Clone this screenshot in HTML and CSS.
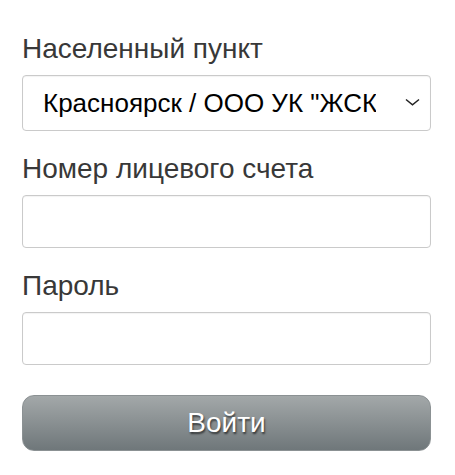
FILE: index.html
```html
<!DOCTYPE html>
<html lang="ru">
  <head>
    <meta charset="UTF-8" />
    <meta name="viewport" content="width=device-width, initial-scale=1.0" />
    <title>Вход</title>
    <link rel="stylesheet" href="styles.css">
  </head>
  <body>
    <form class="login">
      <div class="field">
        <label class="field__label" for="city">Населенный пункт</label>
        <div class="select">
          <select id="city" class="field__control field__control_select">
            <option>Красноярск / ООО УК "ЖСК"</option>
          </select>
          <svg class="select__arrow" width="17" height="8" viewBox="0 0 17 8">
            <path d="M2 1.5 L8.5 6.8 L15 1.5" fill="none" stroke="#222" stroke-width="1.5" />
          </svg>
        </div>
      </div>
      <div class="field">
        <label class="field__label" for="account">Номер лицевого счета</label>
        <input id="account" class="field__control" type="text" />
      </div>
      <div class="field">
        <label class="field__label" for="password">Пароль</label>
        <input id="password" class="field__control" type="password" />
      </div>
      <button class="login__submit" type="submit">Войти</button>
    </form>
  </body>
</html>
```

FILE: styles.css
```css
:root {
  --label-color: #383838;
  --border-color: #cacaca;
  --white-color: #fff;
}

* {
  box-sizing: border-box;
  margin: 0;
  padding: 0;
}
body {
  font-family: "Liberation Sans", Arial, sans-serif;
  background-color: var(--white-color);
}
.login {
  width: 409px;
  margin: 33px 0 0 22px;
  display: flex;
  flex-direction: column;
  gap: 22px;
}
.field {
  display: flex;
  flex-direction: column;
  gap: 10px;
}
.field__label {
  font-size: 28px;
  line-height: 32px;
  color: var(--label-color);
}
.field__control {
  width: 100%;
  height: 53px;
  border: solid 1px var(--border-color);
  border-radius: 4px;
  box-shadow: inset 0 1px 1px rgba(0, 0, 0, 0.05);
  background-color: var(--white-color);
  font-family: inherit;
  font-size: 26px;
  color: #000;
  padding: 0 20px;
  outline: none;
}
.select {
  position: relative;
}
.field__control_select {
  height: 56px;
  appearance: none;
  -webkit-appearance: none;
  padding: 0 54px 0 20px;
}
.select__arrow {
  position: absolute;
  right: 10px;
  top: 23px;
  pointer-events: none;
}
.login__submit {
  margin-top: 8px;
  height: 56px;
  border: solid 1px #8b9193;
  border-radius: 12px;
  background: linear-gradient(to bottom, #a3a8a9, #6f777a);
  color: var(--white-color);
  font-family: inherit;
  font-size: 28px;
  text-shadow: 1px 2px 2px rgba(0, 0, 0, 0.6);
  cursor: pointer;
}
```
